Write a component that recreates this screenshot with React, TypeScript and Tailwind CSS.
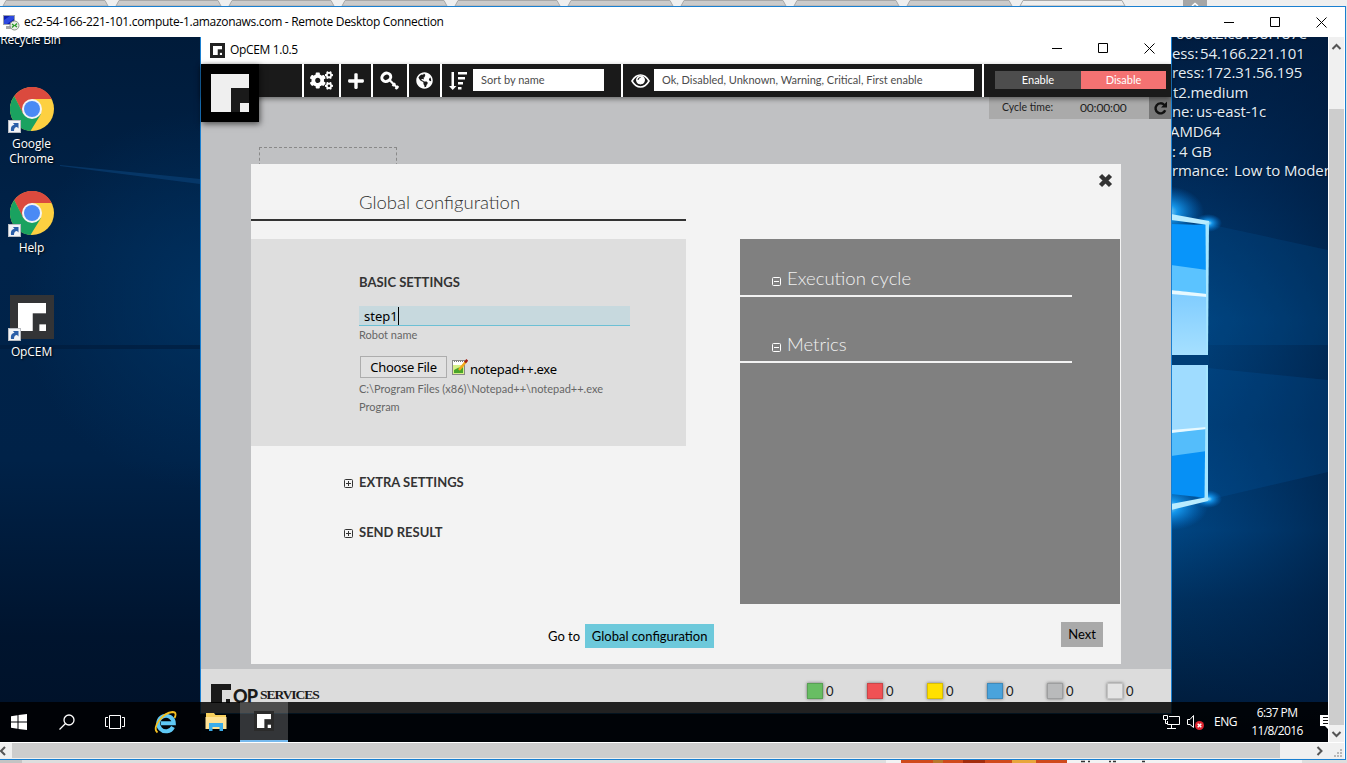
import clsx from "clsx";
import type { ReactNode } from "react";
import { FaCogs, FaGlobeAmericas, FaPlus } from "react-icons/fa";

const tabs = [3, 116, 229, 342, 455, 568, 681, 794, 907, 1020];

const instanceInfo = [
  { label: "", value: "06e0t2.c8198f187e", gap: "ml-[4px] tracking-[0.2px]" },
  { label: "ess:", value: "54.166.221.101", gap: "w-[28px]" },
  { label: "ress:", value: "172.31.56.195", gap: "w-[34px]" },
  { label: "", value: "t2.medium", gap: "w-[1px]" },
  { label: "ne:", value: "us-east-1c", gap: "w-[24px]" },
  { label: "", value: "AMD64", gap: "-ml-[2px]" },
  { label: ":", value: "4 GB", gap: "w-[7px]" },
  { label: "rmance:", value: "Low to Moderate", gap: "w-[62px]" },
];

const counters = ["bg-[#68bd63]", "bg-[#f05154]", "bg-[#ffe000]", "bg-[#4aa3dc]", "bg-[#b9babb]", "bg-[#e4e4e4]"];

export default function App() {
  return (
    <div className="relative flex h-[763px] w-[1347px] flex-col overflow-hidden bg-[#e3e3e3] font-['Open_Sans',sans-serif] text-black">
      <BrowserTabs />
      <div className="flex h-[754px] w-[1346px] flex-col border-y border-r border-[#1a7fd0] bg-white">
        <RemoteTitleBar />
        <div className="flex h-[705px]">
          <Desktop />
          <VerticalScrollbar />
        </div>
        <HorizontalScrollbar />
      </div>
      <PageBehind />
    </div>
  );
}

function BrowserTabs() {
  return (
    <svg width="1347" height="6" className="block shrink-0">
      <rect width="1347" height="6" fill="#efefef" />
      {tabs.map((x, index) => (
        <path
          key={x}
          d={`M${x} 6 L${x + 3} 0.5 H${x + 102} L${x + 105} 6 Z`}
          fill={index === tabs.length - 1 ? "#eeeeee" : "#cbcbcb"}
          stroke="#a9a9a9"
        />
      ))}
      <rect x="1183" width="24" height="6" fill="#a6a6a6" />
      <path d="M1192 6 L1195 3.500 L1198 6" fill="none" stroke="#fff" strokeWidth="1.500" />
    </svg>
  );
}

function PageBehind() {
  return (
    <svg width="1347" height="3" className="block shrink-0">
      <rect width="1347" height="3" fill="#dedede" />
      <rect width="22" height="3" fill="#c4c4c4" />
      <rect x="886" width="416" height="3" fill="#f3f3f3" />
      <rect x="901" width="166" height="3" fill="#cf4a1c" />
      <rect x="933" width="10" height="3" fill="#b8782c" />
      <rect x="963" width="22" height="3" fill="#a32d0d" />
      <rect x="1012" width="24" height="3" fill="#e8a63b" />
      <path d="M1081 1.500h4m3 0h2m19 0h2m2 0h3m26 0h3" stroke="#333" strokeWidth="1.500" />
    </svg>
  );
}

function WindowButtons({ className }: { className: string }) {
  return (
    <svg width="104" height="12" viewBox="0 0 104 12" fill="none" stroke="#000" className={className}>
      <path d="M0 6.500h10M46.500 1.500h9v9h-9zM92.500 1.500l10 10M102.500 1.500l-10 10" />
    </svg>
  );
}

function RemoteTitleBar() {
  return (
    <div className="flex h-[30px] shrink-0 items-center bg-white pr-[17px] pl-[3px]">
      <svg width="17" height="17" viewBox="0 0 17 17">
        <rect x="0.500" y="1.500" width="11" height="9" fill="#0f1fb0" stroke="#9aa0ac" />
        <path d="M1 6 L7 2 H11 V5 L4 10 H1Z" fill="#2d49e0" />
        <path d="M3 12h6v3H3z" fill="#a7a7a7" />
        <circle cx="11.500" cy="11.500" r="4.500" fill="#e9ece6" stroke="#8a9485" />
        <path d="M9 10l2 1.500-2 2M14 9.500l-2 2 2 1.500" fill="none" stroke="#2b9b28" strokeWidth="1.300" />
      </svg>
      <span className="ml-[4px] text-[12px] tracking-[-0.3px] whitespace-nowrap">
        ec2-54-166-221-101.compute-1.amazonaws.com - Remote Desktop Connection
      </span>
      <WindowButtons className="ml-auto" />
    </div>
  );
}

function Desktop() {
  return (
    <div className="relative h-[705px] w-[1328px] shrink-0 overflow-hidden bg-[#00152e]">
      <Wallpaper />
      <div className="absolute top-0 left-0 w-[63px] text-center text-[12px] leading-[15px] tracking-[-0.1px] text-white [text-shadow:1px_1px_2px_#000]">
        <div className="-mt-[5px] -ml-[2px] h-[55px] whitespace-nowrap tracking-[-0.2px]">Recycle Bin</div>
        <Shortcut icon={<ChromeLogo />}>
          Google
          <br />
          Chrome
        </Shortcut>
        <Shortcut icon={<ChromeLogo />}>Help</Shortcut>
        <Shortcut icon={<OpMark size={44} frame="#333436" fill="#fff" dark="#333436" inset={8} />}>OpCEM</Shortcut>
      </div>
      <div className="absolute top-0 left-[1172px] h-[150px] w-[156px] overflow-hidden text-[15px] leading-[19.600px] text-[#e3edf5] [text-shadow:1px_1px_1px_#00122a]">
        <div className="-mt-[13px]">
          {instanceInfo.map(({ label, value, gap }) => (
            <div key={value} className="flex whitespace-nowrap tracking-[-0.1px]">
              <span className={clsx("shrink-0", gap)}>{label}</span>
              {value}
            </div>
          ))}
        </div>
      </div>
      <OpCemWindow />
      <Taskbar />
    </div>
  );
}

function Wallpaper() {
  return (
    <svg width="1328" height="705" viewBox="0 37 1328 705" className="absolute inset-0">
      <defs>
        <linearGradient id="left" x1="0" y1="0" x2="0" y2="1">
          <stop offset="0" stopColor="#001b3a" />
          <stop offset="0.3" stopColor="#00234a" />
          <stop offset="0.6" stopColor="#002248" />
          <stop offset="0.85" stopColor="#00142e" />
          <stop offset="1" stopColor="#001128" />
        </linearGradient>
        <radialGradient id="leftGlow" gradientUnits="userSpaceOnUse" cx="210" cy="300" r="190">
          <stop offset="0" stopColor="#003566" stopOpacity="0.75" />
          <stop offset="1" stopColor="#003566" stopOpacity="0" />
        </radialGradient>
        <linearGradient id="right" x1="0" y1="0" x2="0" y2="1">
          <stop offset="0" stopColor="#001c3f" />
          <stop offset="0.2" stopColor="#002b5a" />
          <stop offset="0.4" stopColor="#004480" />
          <stop offset="0.55" stopColor="#003a70" />
          <stop offset="0.7" stopColor="#004582" />
          <stop offset="0.8" stopColor="#00305e" />
          <stop offset="1" stopColor="#001631" />
        </linearGradient>
        <linearGradient id="rightShade" x1="0" y1="0" x2="1" y2="0">
          <stop offset="0" stopColor="#00204a" stopOpacity="0" />
          <stop offset="1" stopColor="#001a3c" stopOpacity="0.6" />
        </linearGradient>
        <radialGradient id="flare">
          <stop offset="0" stopColor="#bff0ff" />
          <stop offset="0.3" stopColor="#19a6ff" stopOpacity="0.85" />
          <stop offset="1" stopColor="#0078e0" stopOpacity="0" />
        </radialGradient>
        <linearGradient id="pane" x1="0" y1="0" x2="0" y2="1">
          <stop offset="0" stopColor="#7fccff" />
          <stop offset="1" stopColor="#a6e0ff" />
        </linearGradient>
      </defs>
      <rect y="37" width="201" height="705" fill="url(#left)" />
      <rect y="37" width="201" height="705" fill="url(#leftGlow)" />
      <path d="M60 165 L200 179 V184 L60 166Z" fill="#0a4379" opacity="0.6" />
      <rect y="345" width="201" height="4" fill="#001a3a" opacity="0.6" />
      <rect x="1171" y="37" width="157" height="705" fill="url(#right)" />
      <rect x="1171" y="37" width="157" height="705" fill="url(#rightShade)" />
      <path d="M1208 224 L1328 250 V345 H1208Z" fill="#00559b" opacity="0.22" />
      <path d="M1208 500 L1328 472 V380 L1208 368Z" fill="#0060ad" opacity="0.2" />
      <ellipse cx="1166" cy="212" rx="38" ry="26" fill="url(#flare)" />
      <ellipse cx="1208" cy="223" rx="14" ry="9" fill="url(#flare)" />
      <ellipse cx="1166" cy="507" rx="42" ry="24" fill="url(#flare)" />
      <ellipse cx="1208" cy="499" rx="14" ry="9" fill="url(#flare)" />
      <path d="M1171 224 L1208 225 V355 H1171Z" fill="#0895fa" />
      <path d="M1171 265 L1207 270 V295 L1171 290Z" fill="#5bc3ff" />
      <path d="M1171 292 L1207 295 V355 H1171Z" fill="url(#pane)" />
      <path d="M1171 290 L1207 294 V297 L1171 294Z" fill="#e8f9ff" />
      <path d="M1171 214 L1209 221 V225 L1171 220Z" fill="#b9ecff" />
      <path d="M1171 365 H1208 V498 L1171 494Z" fill="#0690f5" />
      <path d="M1171 365 H1207 V430 L1171 433Z" fill="#9fdcff" />
      <path d="M1171 433 L1207 428 V451 L1171 456Z" fill="#54bdfb" />
      <path d="M1171 430 L1207 427 V429 L1171 433Z" fill="#e8f9ff" />
      <path d="M1171 504 L1208 497 V501 L1171 510Z" fill="#b9ecff" />
      <path d="M1205.500 224 L1209 222 L1208 355 H1206.500Z" fill="#a5e6ff" />
      <path d="M1206 365 H1208 V501 L1204.500 499Z" fill="#a5e6ff" />
      <rect x="1171" y="355" width="38" height="10" fill="#003f78" />
    </svg>
  );
}

function Shortcut({ icon, children }: { icon: ReactNode; children: ReactNode }) {
  return (
    <div className="h-[104px]">
      <div className="relative ml-[10px] h-[44px] w-[44px]">
        {icon}
        <svg width="13" height="13" viewBox="0 0 13 13" className="absolute bottom-[-2px] left-[-2px]">
          <rect x="0.500" y="0.500" width="12" height="12" fill="#f2f4f7" stroke="#b9bcc2" />
          <path d="M3 11 C2.500 7 4 5 6.500 5 L5 3 H10.500 V8.500 L9 7 C7 7 6 8.500 6 11Z" fill="#2a5ea8" />
        </svg>
      </div>
      <div className="mt-[5px]">{children}</div>
    </div>
  );
}

function ChromeLogo() {
  return (
    <svg width="44" height="44" viewBox="0 0 44 44" className="block">
      <circle cx="22" cy="22" r="22" fill="#fdd041" />
      <path d="M22 22 L22 12 H41.700 A22 22 0 0 0 4.200 9 L13 27Z" fill="#db4a3e" />
      <path d="M4.200 9 A22 22 0 0 0 20.500 44 L31 27 L22 31 L13.300 27Z" fill="#1aa260" />
      <circle cx="22" cy="22" r="10" fill="#f4f4f4" />
      <circle cx="22" cy="22" r="8" fill="#4a8af5" />
    </svg>
  );
}

interface OpMarkProps {
  size: number;
  frame: string;
  fill: string;
  dark: string;
  inset: number;
}

function OpMark({ size, frame, fill, dark, inset }: OpMarkProps) {
  const inner = size - inset * 2;
  return (
    <svg width={size} height={size} className="block shrink-0">
      <rect width={size} height={size} fill={frame} />
      <svg x={inset} y={inset} width={inner} height={inner} viewBox="0 0 38 38">
        <rect width="38" height="38" fill={fill} />
        <rect x="20" y="14" width="18" height="24" fill={dark} />
        <rect x="29" y="29" width="9" height="9" fill={fill} />
      </svg>
    </svg>
  );
}

function OpCemWindow() {
  return (
    <div className="absolute top-0 left-[200px] flex h-[677px] w-[972px] flex-col border-x border-b border-[#1a7fd0] bg-[#c0c1c3] font-['Lato',sans-serif]">
      <div className="flex h-[27px] shrink-0 items-center bg-white pr-[15px] pl-[9px] font-['Open_Sans',sans-serif] text-[12px]">
        <OpMark size={15} frame="#222" fill="#fff" dark="#222" inset={3} />
        <span className="ml-[5px] pb-[5px] leading-[15px] tracking-[-0.35px] mt-[3px]">OpCEM 1.0.5</span>
        <WindowButtons className="mt-[-6px] ml-auto" />
      </div>
      <Toolbar />
      <div className="relative h-[572px] shrink-0">
        <CycleTime />
        <div className="absolute top-[50px] left-[58px] h-[30px] w-[138px] border border-dashed border-[#898989]" />
        <ConfigDialog />
      </div>
      <StatusBar />
    </div>
  );
}

function Toolbar() {
  return (
    <div className="relative z-10 flex h-[33px] shrink-0 bg-[#1a1a1a] text-white shadow-[0_2px_5px_rgba(0,0,0,0.45)]">
      <div className="w-[101px]">
        <div className="absolute top-0 left-0 shadow-[1px_2px_6px_rgba(0,0,0,0.6)]">
          <OpMark size={58} frame="#000" fill="#efefef" dark="#1a1a1a" inset={10} />
        </div>
      </div>
      <ToolbarCell className="w-[37px]">
        <FaCogs size={23} />
      </ToolbarCell>
      <ToolbarCell className="w-[32px]">
        <FaPlus size={18} />
      </ToolbarCell>
      <ToolbarCell className="w-[36px]">
        <svg width="20" height="20" viewBox="0 0 20 20" fill="none" stroke="#fff">
          <ellipse cx="6.300" cy="6.300" rx="4.600" ry="4" strokeWidth="3" transform="rotate(-35 6.300 6.300)" />
          <path d="M9.500 9 L18 17.500M12.500 15 L15.200 12.300M15.500 18 L18.300 15" strokeWidth="2.200" />
        </svg>
      </ToolbarCell>
      <ToolbarCell className="w-[33px]">
        <FaGlobeAmericas size={17} />
      </ToolbarCell>
      <div className="flex w-[181px] items-center border-l-2 border-white pl-[7px]">
        <svg width="18" height="20" viewBox="0 0 18 20" fill="#fff">
          <path d="M2.500 1h2.500v14h2.500L3.700 19 0 15h2.500zM9 1h9v2.500H9zM9 6h7v2.500H9zM9 11h5v2.500H9zM9 16h3.500v2.500H9z" />
        </svg>
        <Field className="ml-[6px] w-[131px]">Sort by name</Field>
      </div>
      <div className="flex w-[361px] items-center border-l-2 border-white pl-[8px]">
        <svg width="19" height="14" viewBox="0 0 19 14" fill="none" stroke="#fff">
          <path d="M1 7 C4 1.800 7 1 9.500 1 S15 1.800 18 7 C15 12.200 12 13 9.500 13 S4 12.200 1 7Z" strokeWidth="1.600" />
          <circle cx="9.500" cy="6" r="4" fill="#fff" />
          <path d="M7 6 A2.600 2.600 0 0 1 9.500 3.500" stroke="#1a1a1a" />
        </svg>
        <Field className="ml-[4px] w-[320px]">Ok, Disabled, Unknown, Warning, Critical, First enable</Field>
      </div>
      <div className="flex flex-1 items-center border-l-2 border-white pb-[1px] pl-[11px] text-center text-[11px] leading-[18px]">
        <div className="w-[86px] bg-[#4d4d4d]">Enable</div>
        <div className="w-[85px] bg-[#f47272]">Disable</div>
      </div>
    </div>
  );
}

function ToolbarCell({ className, children }: { className: string; children: ReactNode }) {
  return <div className={clsx("flex items-center justify-center border-l-2 border-white", className)}>{children}</div>;
}

function Field({ className, children }: { className: string; children: ReactNode }) {
  return (
    <div className={clsx("mb-[1px] h-[22px] bg-white pl-[8px] text-[11px] leading-[22px] text-[#4c4c4c]", className)}>
      {children}
    </div>
  );
}

function CycleTime() {
  return (
    <div className="ml-auto flex h-[22px] w-[182px] items-center bg-[#aaaaaa] pl-[13px] text-[#222]">
      <span className="w-[78px] text-[10.500px]">Cycle time:</span>
      <span className="text-[12px] tracking-[-0.15px]">00:00:00</span>
      <div className="ml-auto flex h-[22px] w-[22px] items-center justify-center bg-[#777777]">
        <svg width="15" height="15" viewBox="0 0 15 15">
          <path d="M11.300 4 A5 5 0 1 0 12.200 9.200" fill="none" stroke="#111" strokeWidth="2.400" />
          <path d="M14 0.500 V6.500 H8Z" fill="#111" />
        </svg>
      </div>
    </div>
  );
}

function ConfigDialog() {
  return (
    <div className="absolute top-[67px] left-[50px] flex h-[500px] w-[870px] flex-col bg-[#f3f3f3]">
      <div className="flex h-[75px] shrink-0 justify-between">
        <h1 className="h-[57px] w-[435px] border-b-2 border-[#333] pt-[25px] pl-[108px] text-[18.500px] leading-[26px] font-light text-[#333]">
          Global configuration
        </h1>
        <svg width="15" height="15" viewBox="0 0 15 15" className="mt-[9px] mr-[8px]">
          <path d="M2.500 2.500l10 10M12.500 2.500l-10 10" stroke="#333" strokeWidth="4.400" />
        </svg>
      </div>
      <div className="flex justify-between pr-[1px]">
        <div className="w-[435px]">
          <BasicSettings />
          <CollapsedSection className="mt-[27px]">EXTRA SETTINGS</CollapsedSection>
          <CollapsedSection className="mt-[30px]">SEND RESULT</CollapsedSection>
        </div>
        <div className="h-[365px] w-[380px] bg-[#808080] pt-[24px]">
          <PanelSection>Execution cycle</PanelSection>
          <PanelSection className="mt-[32px]">Metrics</PanelSection>
        </div>
      </div>
      <div className="flex items-start pt-[18px] pr-[18px] pl-[297px] text-[13px]">
        <span className="mt-[2px] leading-[24px]">Go to</span>
        <button className="mt-[2px] ml-[5px] h-[24px] w-[129px] bg-[#6dc9db] leading-[24px]">Global configuration</button>
        <button className="ml-auto h-[25px] w-[42px] bg-[#a9a9a9] leading-[23px]">Next</button>
      </div>
    </div>
  );
}

function BasicSettings() {
  return (
    <div className="h-[207px] bg-[#dedede] pt-[33px] pl-[108px] text-[11px] leading-[18px] text-[#666]">
      <h2 className="text-[13px] leading-[20px] font-bold text-[#333]">BASIC SETTINGS</h2>
      <div className="mt-[14px] flex h-[20px] w-[271px] items-center border-b border-[#6cc0d5] bg-[#c7d9de] pl-[5px] font-['Noto_Sans',sans-serif] text-[13px] text-black">
        step1
        <span className="h-[18px] w-px bg-black" />
      </div>
      <div>Robot name</div>
      <div className="mt-[12px] flex h-[22px] items-center pl-px font-['Noto_Sans',sans-serif] text-[13px] text-black">
        <button className="h-[22px] w-[87px] border border-[#adadad] bg-[#e1e1e1] leading-[20px] tracking-[-0.3px]">
          Choose File
        </button>
        <NotepadIcon />
        <span className="mt-[4px] ml-[2px] tracking-[-0.3px]">notepad++.exe</span>
      </div>
      <div className="mt-[2px]">C:\Program Files (x86)\Notepad++\notepad++.exe</div>
      <div>Program</div>
    </div>
  );
}

function NotepadIcon() {
  return (
    <svg width="16" height="17" viewBox="0 0 16 17" className="ml-[5px]">
      <rect x="0.500" y="1.500" width="12" height="14" fill="#fff" stroke="#888" />
      <path d="M1 6h11v9H1z" fill="#d6f08a" />
      <path d="M2 11 Q6 8 11 8 V14 H2Z" fill="#49a52a" />
      <path d="M2 2.500h10" stroke="#777" strokeDasharray="1 1" />
      <path d="M7 11 L14 2.500" stroke="#f2a91c" strokeWidth="2.500" />
      <path d="M13 3.500 L15.300 0.800" stroke="#a01f14" strokeWidth="2.500" />
    </svg>
  );
}

function Toggle({ open, color }: { open: boolean; color: string }) {
  return (
    <svg width="9" height="9" viewBox="0 0 9 9" fill="none" stroke={color}>
      <rect x="0.500" y="0.500" width="8" height="8" rx="1" />
      <path d={open ? "M2 4.500h5" : "M2 4.500h5M4.500 2v5"} />
    </svg>
  );
}

function CollapsedSection({ className, children }: { className: string; children: ReactNode }) {
  return (
    <div className={clsx("flex h-[20px] items-center pl-[93px] text-[13px] font-bold text-[#333]", className)}>
      <Toggle open={false} color="#333" />
      <span className="ml-[6px]">{children}</span>
    </div>
  );
}

function PanelSection({ className, children }: { className?: string; children: ReactNode }) {
  return (
    <div
      className={clsx(
        "flex h-[34px] w-[332px] items-center border-b-2 border-[#f3f3f3] pl-[32px] text-[18.500px] font-light text-[#f0f0f0]",
        className,
      )}
    >
      <span className="mt-[4px]">
        <Toggle open color="#fff" />
      </span>
      <span className="ml-[6px]">{children}</span>
    </div>
  );
}

function StatusBar() {
  return (
    <div className="flex flex-1 items-start bg-[#dcdcdc] pl-[10px] text-[#1a1a1a]">
      <svg width="21" height="19" viewBox="0 0 21 19" className="mt-[15px] shrink-0">
        <path d="M0 0h20v6h-9v13H0zM15 15h4v4h-4z" fill="#1a1a1a" />
      </svg>
      <span className="mt-[15px] ml-[1px] w-[27px] text-[18px] leading-[24px] font-black tracking-[-0.8px]">OP</span>
      <span className="mt-[15px] w-[547px] font-['Liberation_Serif',serif] text-[13.500px] leading-[22px] font-bold tracking-[-1.05px]">
        SERVICES
      </span>
      {counters.map((color) => (
        <div key={color} className="mt-[14px] flex w-[60px] items-center gap-[3px] text-[13px] leading-[16px]">
          <span className={clsx("h-[16px] w-[16px] border border-black/15 shadow-[0_0_3px_rgba(0,0,0,0.5)]", color)} />
          0
        </div>
      ))}
    </div>
  );
}

function Taskbar() {
  return (
    <div className="absolute bottom-0 left-0 flex h-[40px] w-full items-center bg-black/85 text-white">
      <div className="flex w-[43px] justify-center pr-[5px]">
        <svg width="16" height="16" viewBox="0 0 16 16" fill="#fff">
          <path d="M0 2.300 L6.500 1.300V7.500H0zM7.500 1.100 L16 0v7.500H7.500zM0 8.500h6.500v6.200L0 13.700zM7.500 8.500H16V16l-8.500-1.100z" />
        </svg>
      </div>
      <div className="flex w-[48px] justify-center">
        <svg width="16" height="16" viewBox="0 0 16 16" fill="none" stroke="#fff" strokeWidth="1.300">
          <circle cx="10" cy="6" r="5" />
          <path d="M6.500 9.500 L0.500 15.500" />
        </svg>
      </div>
      <div className="flex w-[48px] justify-center">
        <svg width="20" height="14" viewBox="0 0 20 14" fill="none" stroke="#fff">
          <path d="M4.500 0.500h11v13h-11zM3 2.500H0.500v9H3M17 2.500h2.500v9H17" />
        </svg>
      </div>
      <div className="flex w-[53px] justify-center">
        <svg width="23" height="23" viewBox="0 0 23 23" fill="none">
          <path d="M19 16 A7.800 7.800 0 1 1 19.800 12.300 H7" stroke="#5fc8f5" strokeWidth="4" />
          <path d="M3.500 21.500 C-3 17 9 1.500 18.500 1 C23 1 21.500 5 20.500 7" stroke="#f5c021" strokeWidth="1.800" />
        </svg>
      </div>
      <div className="flex w-[48px] justify-center">
        <svg width="22" height="18" viewBox="0 0 22 18">
          <path d="M1 0h8l1.500 2H21v14H1z" fill="#f6cf5c" />
          <path d="M0.500 4h21v12H0.500z" fill="#ffe294" />
          <path d="M4 18v-8h14v8h-3.500v-4h-7v4z" fill="#3badea" />
        </svg>
      </div>
      <div className="flex h-full w-[48px] items-center justify-center border-b-2 border-[#76b9ed] bg-white/20">
        <OpMark size={20} frame="#2b2b2b" fill="#fff" dark="#2b2b2b" inset={3} />
      </div>
      <div className="ml-auto flex items-center text-[12px] leading-[18px]">
        <svg width="17" height="14" viewBox="0 0 17 14" fill="none" stroke="#fff">
          <path d="M6 1.500h10.500v8H4.500V6M8.500 10v3M4 13.500h9M0.500 0.500h4v4h-4zM2.500 4.500v4H4" />
        </svg>
        <svg width="18" height="16" viewBox="0 0 18 16" className="ml-[7px]">
          <path d="M0.500 5.500h2.500l3.500-4v12L3 10.500H0.500z" fill="none" stroke="#fff" />
          <circle cx="12.500" cy="11.500" r="4.500" fill="#dd2430" />
          <path d="M10.700 9.700l3.600 3.600M14.300 9.700l-3.600 3.600" stroke="#fff" strokeWidth="1.400" />
        </svg>
        <span className="ml-[9px] w-[36px] tracking-[-0.5px]">ENG</span>
        <span className="w-[54px] text-center tracking-[-0.6px] whitespace-nowrap">
          6:37 PM
          <br />
          11/8/2016
        </span>
        <svg width="8" height="16" viewBox="0 0 8 16" className="ml-[16px]">
          <path d="M0 1h8v14L5 12H0z" fill="#fff" />
          <path d="M3 3.500h5M3 6.500h5M3 9.500h5" stroke="#111" />
        </svg>
      </div>
    </div>
  );
}

function VerticalScrollbar() {
  return (
    <div className="ml-[1px] flex w-[15px] flex-col bg-[#f0f0f0]">
      <svg width="15" height="72" viewBox="0 0 15 72" fill="none" stroke="#555" strokeWidth="2">
        <path d="M3.500 12 L7.500 8 L11.500 12" />
      </svg>
      <div className="h-[616px] bg-[#cdcdcd]" />
      <svg width="15" height="17" viewBox="0 0 15 17" fill="none" stroke="#555" strokeWidth="2">
        <path d="M3.500 7 L7.500 11 L11.500 7" />
      </svg>
    </div>
  );
}

function HorizontalScrollbar() {
  return (
    <div className="mt-px flex h-[16px] w-[1344px] bg-[#f0f0f0]">
      <svg width="12" height="16" viewBox="0 0 12 16" fill="none" stroke="#555" strokeWidth="2">
        <path d="M5 4 L1 8 L5 12" />
      </svg>
      <div className="h-[15px] w-[1268px] bg-[#cdcdcd]" />
      <svg width="64" height="16" viewBox="0 0 64 16" fill="none">
        <path d="M37.500 4 L41.500 8 L37.500 12" stroke="#555" strokeWidth="2" />
        <path d="M60 6h2v2h-2zM57 9h2v2h-2zM60 9h2v2h-2zM54 12h2v2h-2zM57 12h2v2h-2zM60 12h2v2h-2z" fill="#b8b8b8" />
      </svg>
    </div>
  );
}
